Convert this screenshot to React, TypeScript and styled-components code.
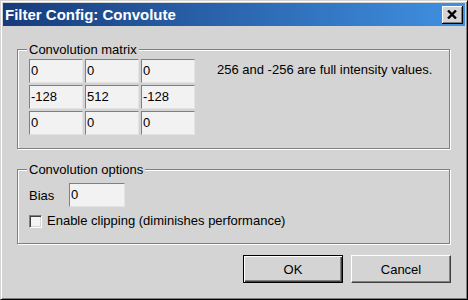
import styled, { createGlobalStyle } from "styled-components";

const GlobalStyle = createGlobalStyle`
  html, body {
    margin: 0;
    padding: 0;
    background: #d4d4d4;
  }
  body {
    font-family: "Liberation Sans", Arial, sans-serif;
    font-size: 13px;
    color: #000;
  }
`;

const Window = styled.div`
  box-sizing: border-box;
  width: 468px;
  height: 300px;
  background: #d4d4d4;
  border: 1px solid;
  border-color: #d4d4d4 #000 #000 #d4d4d4;
  box-shadow: inset 1px 1px #fff, inset -1px -1px #808080;
  padding: 2px;
  display: flex;
  flex-direction: column;
`;

const TitleBar = styled.div`
  height: 23px;
  flex: none;
  display: flex;
  align-items: center;
  justify-content: space-between;
  padding: 0 2px;
  background: linear-gradient(to right, #173b7c, #4091e2);
`;

const Title = styled.span`
  color: #fff;
  font-weight: bold;
  font-size: 15px;
  line-height: 23px;
`;

const CloseButton = styled.div`
  box-sizing: border-box;
  width: 21px;
  height: 18px;
  background: #d4d4d4;
  border-right: 1px solid #000;
  border-bottom: 1px solid #000;
  box-shadow: inset 1px 1px #fff, inset -1px -1px #808080;
  display: flex;
  align-items: center;
  justify-content: center;
`;

const Body = styled.div`
  flex: 1;
  display: flex;
  flex-direction: column;
  padding: 16px 14px 0;
`;

const Group = styled.fieldset<{ $top?: number; $pad: string }>`
  margin: ${(p) => p.$top ?? 0}px 1px 0 0;
  padding: ${(p) => p.$pad};
  min-inline-size: 0;
  border: 1px solid #808080;
  box-shadow: inset 1px 1px #fff, 1px 1px #fff;
`;

const Legend = styled.legend`
  margin-left: -2px;
  padding: 0 2px;
  line-height: 15px;
  background: #d4d4d4;
`;

const MatrixRow = styled.div`
  display: flex;
  align-items: flex-start;
`;

const Matrix = styled.div`
  display: grid;
  grid-template-columns: repeat(3, 54px);
  grid-auto-rows: 24px;
  gap: 2px;
`;

const Field = styled.input<{ $w: number }>`
  box-sizing: border-box;
  width: ${(p) => p.$w}px;
  height: 24px;
  margin: 0;
  padding: 0 1px 2px;
  border: 1px solid;
  border-color: #808080 #e4e4e4 #e4e4e4 #808080;
  background: #f2f2f2;
  font-family: "Liberation Sans", Arial, sans-serif;
  font-size: 13px;
  color: #000;
  outline: none;
`;

const Note = styled.div`
  margin: 3px 0 0 22px;
  line-height: 15px;
`;

const BiasRow = styled.div`
  display: flex;
  align-items: center;
  height: 24px;
`;

const BiasLabel = styled.span`
  width: 40px;
  line-height: 15px;
`;

const CheckRow = styled.label`
  display: flex;
  align-items: flex-start;
  gap: 5px;
  margin-top: 6px;
  line-height: 15px;
`;

const CheckBox = styled.span`
  box-sizing: border-box;
  width: 13px;
  height: 13px;
  margin-top: 2px;
  border: 1px solid;
  border-color: #808080 #fff #fff #808080;
  box-shadow: inset 1px 1px #404040, inset -1px -1px #d4d4d4;
  background: #f4f4f4;
`;

const ButtonRow = styled.div`
  display: flex;
  justify-content: flex-end;
  gap: 8px;
  margin-top: 11px;
`;

const Button = styled.button<{ $default?: boolean }>`
  box-sizing: border-box;
  width: 100px;
  height: 28px;
  margin: 0;
  padding: 0;
  background: #d4d4d4;
  font-family: "Liberation Sans", Arial, sans-serif;
  font-size: 13px;
  color: #000;
  border: 1px solid;
  border-color: ${(p) => (p.$default ? "#000" : "#fff #404040 #404040 #fff")};
  box-shadow: ${(p) =>
    p.$default
      ? "inset 1px 1px #fff, inset -1px -1px #404040, inset -2px -2px #808080"
      : "inset -1px -1px #808080"};
`;

const matrix = ["0", "0", "0", "-128", "512", "-128", "0", "0", "0"];

export default function App() {
  return (
    <>
      <GlobalStyle />
      <Window>
        <TitleBar>
          <Title>Filter Config: Convolute</Title>
          <CloseButton>
            <svg width="10" height="9" viewBox="0 0 10 9">
              <path d="M1 0.5 L9 8.5 M9 0.5 L1 8.5" stroke="#000" strokeWidth="2.4" />
            </svg>
          </CloseButton>
        </TitleBar>
        <Body>
          <Group $pad="2px 11px 13px">
            <Legend>Convolution matrix</Legend>
            <MatrixRow>
              <Matrix>
                {matrix.map((v, i) => (
                  <Field key={i} $w={54} defaultValue={v} />
                ))}
              </Matrix>
              <Note>256 and -256 are full intensity values.</Note>
            </MatrixRow>
          </Group>
          <Group $top={13} $pad="6px 11px 15px">
            <Legend>Convolution options</Legend>
            <BiasRow>
              <BiasLabel>Bias</BiasLabel>
              <Field $w={56} defaultValue="0" />
            </BiasRow>
            <CheckRow>
              <CheckBox />
              Enable clipping (diminishes performance)
            </CheckRow>
          </Group>
          <ButtonRow>
            <Button $default>OK</Button>
            <Button>Cancel</Button>
          </ButtonRow>
        </Body>
      </Window>
    </>
  );
}
